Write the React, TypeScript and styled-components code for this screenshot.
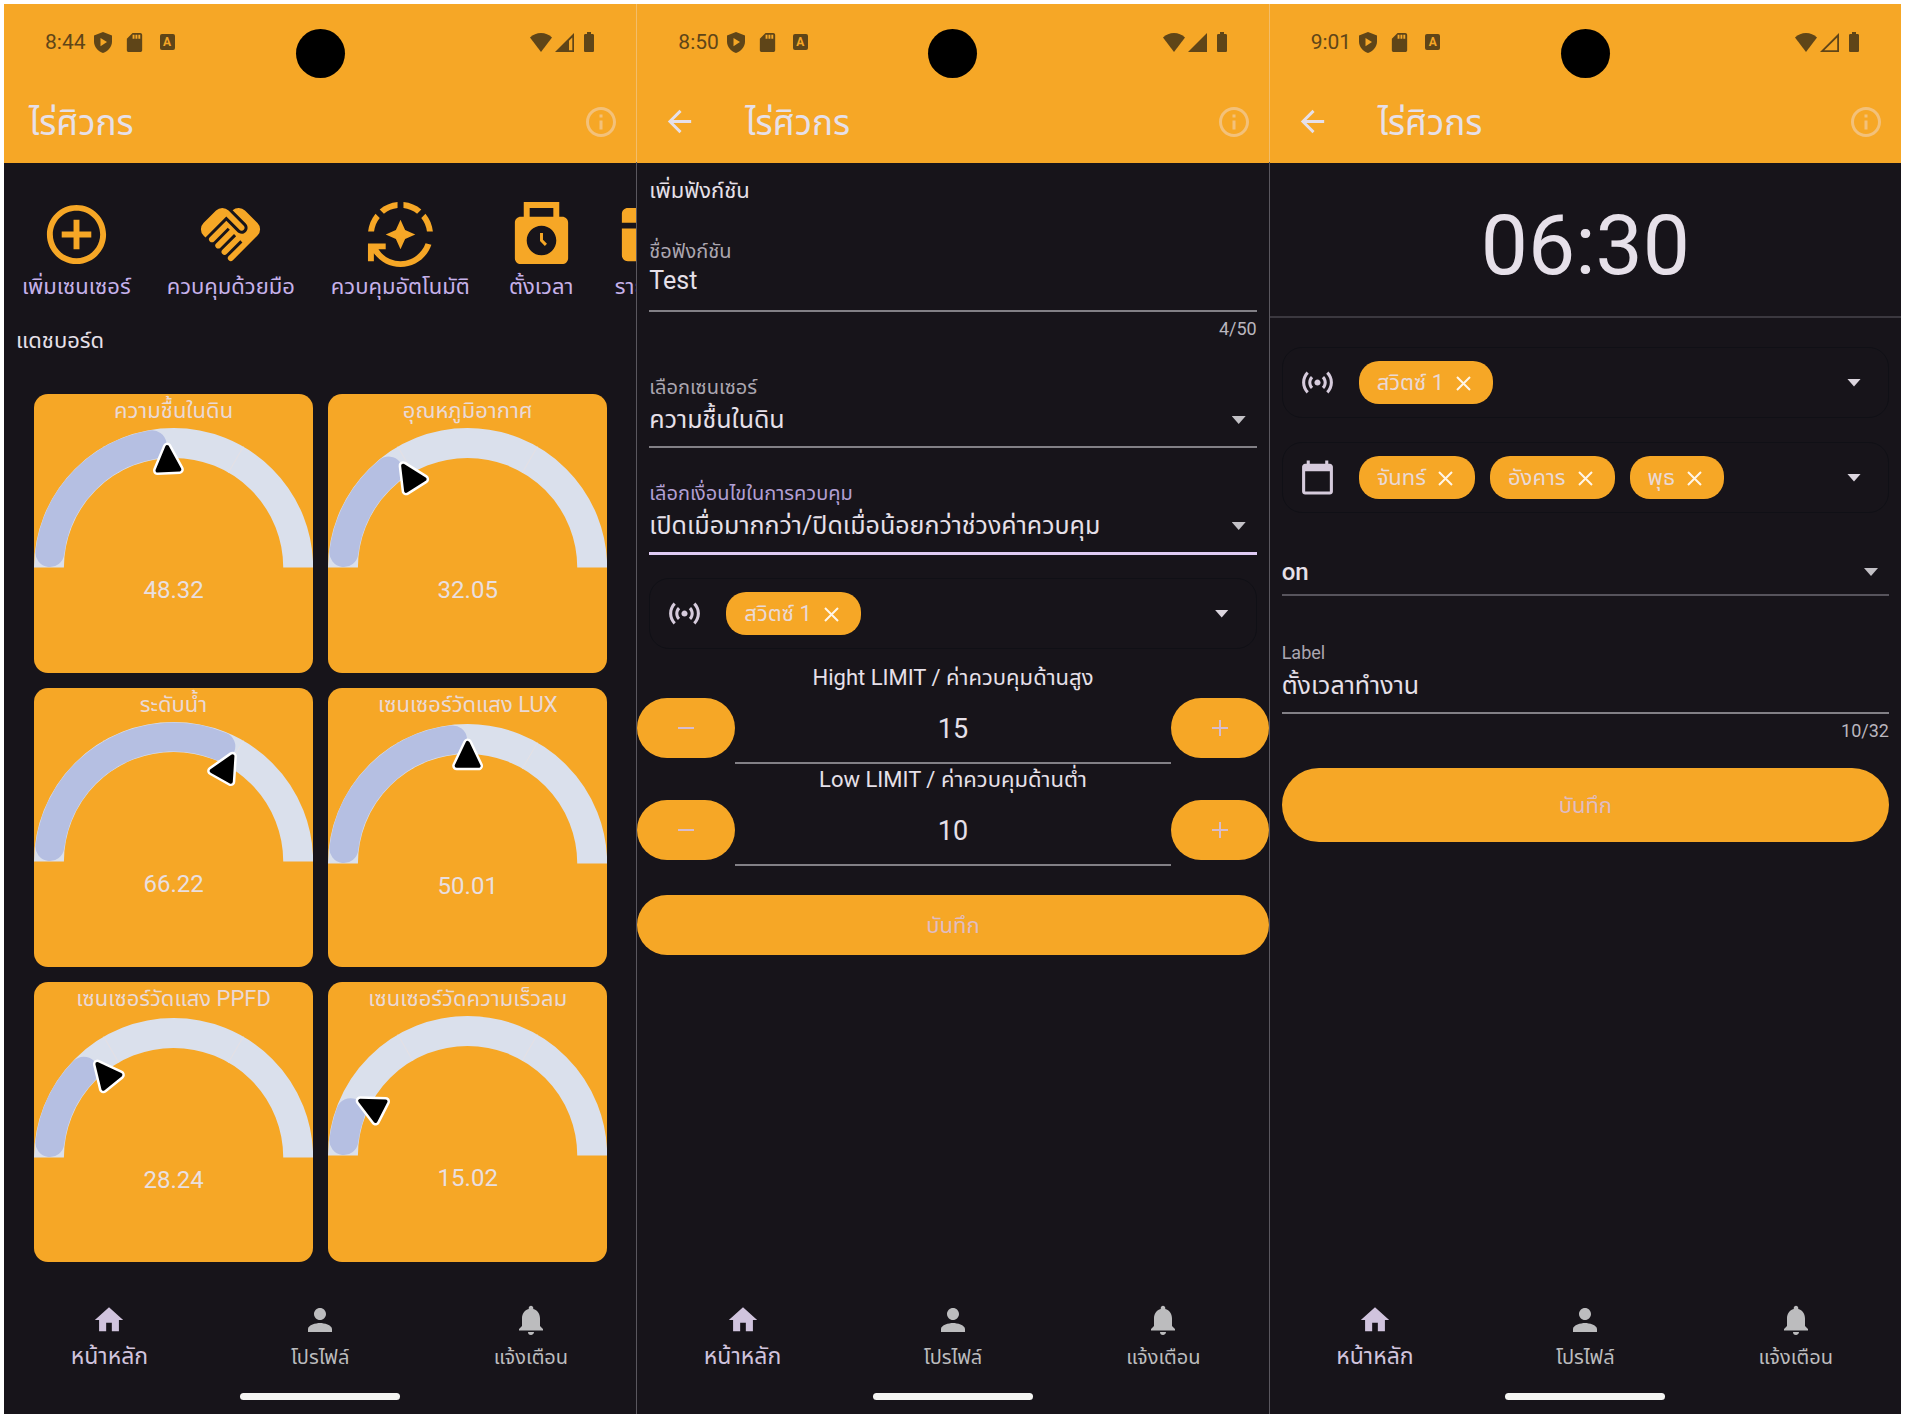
import React from "react";
import styled, { createGlobalStyle } from "styled-components";
import {
  MdAddCircleOutline,
  MdArrowBack,
  MdAutoMode,
  MdBatteryFull,
  MdCalendarToday,
  MdHandshake,
  MdHome,
  MdInfoOutline,
  MdNotifications,
  MdPerson,
  MdPunchClock,
  MdSdCard,
  MdSensors,
  MdTableChart,
} from "react-icons/md";

const color = {
  amber: "#f6a726",
  surface: "#17141a",
  text: "#e6e0e9",
  muted: "#aba6b0",
  primary: "#c6b1ea",
  focus: "#dfcbf4",
  line: "#828086",
  onAmber: "#ead9d6",
  status: "#5f4518",
};

const GlobalStyle = createGlobalStyle`
  * { box-sizing: border-box; }
  body {
    margin: 0;
    background: #fff;
    color: ${color.text};
    font-family: Roboto, "Noto Sans Thai", "Noto Sans", sans-serif;
  }
  button, input, select {
    margin: 0;
    padding: 0;
    border: 0;
    border-radius: 0;
    background: none;
    color: inherit;
    font: inherit;
    outline: none;
  }
  button, select { cursor: pointer; }
  svg { display: block; flex: none; }
`;

const Screens = styled.div`
  display: grid;
  grid-template-columns: repeat(3, minmax(0, 1fr));
  min-height: 100vh;
  padding: 4px 5px 5px 4px;
`;

const Phone = styled.section`
  display: flex;
  flex-direction: column;
  min-width: 0;
  background: ${color.surface};
  & + & {
    border-left: 1px solid;
    border-image: linear-gradient(#f3bd6a 159px, #5a575e 159px) 1;
  }
`;

/* ---------- header ---------- */

const Header = styled.header`
  background: ${color.amber};
`;

const StatusBar = styled.div`
  display: grid;
  grid-template-columns: 1fr auto 1fr;
  height: 74px;
  color: ${color.status};
`;

const StatusGroup = styled.div<{ $end?: boolean }>`
  display: flex;
  align-items: center;
  justify-content: ${(p) => (p.$end ? "flex-end" : "flex-start")};
  gap: ${(p) => (p.$end ? 3 : 8)}px;
  height: 24px;
  margin-top: 26px;
  padding: ${(p) => (p.$end ? "0 35px 0 0" : "0 0 0 41px")};
  font-size: 21px;
`;

const Camera = styled.div`
  width: 49px;
  height: 49px;
  margin-top: 25px;
  border-radius: 50%;
  background: #000;
`;

const StatusTiles = styled.span`
  display: flex;
  align-items: center;
  gap: 14px;
  margin-left: 3px;
`;

const LetterBadge = styled.span`
  width: 15px;
  height: 16px;
  border-radius: 2px;
  background: ${color.status};
  color: ${color.amber};
  font-size: 12px;
  font-weight: 700;
  line-height: 16px;
  text-align: center;
`;

const Toolbar = styled.div`
  display: flex;
  align-items: center;
  height: 85px;
  padding: 2px 17px 0 25px;
`;

const BackButton = styled.button`
  width: 37px;
  margin-right: 46px;
`;

const AppTitle = styled.h1`
  flex: 1;
  margin: 0;
  padding-top: 5px;
  font-size: 35px;
  font-weight: 400;
  line-height: 56px;
`;

const InfoButton = styled.button`
  color: #f3c17a;
`;

/* ---------- bottom navigation ---------- */

const Main = styled.main`
  flex: 1;
`;

const BottomNav = styled.nav`
  display: grid;
  grid-template-columns: repeat(3, 1fr);
`;

const NavLink = styled.a<{ $active?: boolean }>`
  display: flex;
  flex-direction: column;
  align-items: center;
  color: ${(p) => (p.$active ? "#d0c3dd" : "#bcbcbe")};
  font-size: ${(p) => (p.$active ? 23 : 20)}px;
  line-height: 32px;
  text-decoration: none;
  svg {
    height: 36px;
    margin-bottom: 3px;
  }
`;

const GestureBar = styled.div`
  width: 160px;
  height: 7px;
  margin: 20px auto 14px;
  border-radius: 4px;
  background: #f5f5f3;
`;

/* ---------- dashboard ---------- */

const Actions = styled.div`
  display: flex;
  gap: 36px;
  overflow: hidden;
  padding: 36px 0 0 18px;
`;

const Action = styled.button`
  display: flex;
  flex: none;
  flex-direction: column;
  align-items: center;
  color: ${color.primary};
  font-size: 22px;
  line-height: 34px;
  white-space: nowrap;
  svg {
    color: ${color.amber};
  }
`;

const DashTitle = styled.h2`
  margin: 22px 12px 38px;
  font-size: 22px;
  font-weight: 400;
  line-height: 30px;
`;

const Cards = styled.div`
  display: grid;
  grid-template-columns: 1fr 1fr;
  gap: 15px;
  padding: 0 29px 0 30px;
`;

const Card = styled.article`
  aspect-ratio: 1;
  overflow: hidden;
  border-radius: 14px;
  background: ${color.amber};
  color: ${color.onAmber};
  text-align: center;
`;

const CardTitle = styled.h3<{ $latin?: boolean }>`
  margin: 0;
  padding-bottom: ${(p) => (p.$latin ? 2 : 0)}px;
  font-size: 22px;
  font-weight: 400;
  line-height: 34px;
`;

const CardValue = styled.p`
  margin: 0;
  color: #e9dfe0;
  font-size: 24px;
  line-height: 44px;
`;

/* ---------- forms ---------- */

const Form = styled.form<{ $top: number }>`
  padding-top: ${(p) => p.$top}px;
`;

const Inset = styled.div`
  padding: 0 12px;
`;

const FormTitle = styled.h2`
  margin: 0;
  font-size: 22px;
  font-weight: 400;
  line-height: 32px;
`;

const FieldBox = styled.div<{ $top: number }>`
  margin-top: ${(p) => p.$top}px;
`;

const FieldLabel = styled.label<{ $focus?: boolean; $latin?: boolean }>`
  display: block;
  height: 24px;
  color: ${(p) => (p.$focus ? "#b19fd4" : color.muted)};
  font-size: ${(p) => (p.$latin ? 18 : 20)}px;
  line-height: 24px;
`;

const Control = styled.div<{ $thai?: boolean; $focus?: boolean; $dim?: boolean }>`
  display: flex;
  align-items: center;
  padding: ${(p) => (p.$dim ? "1px 0 4px" : p.$thai ? "3px 0 8px" : "0 0 11px")};
  border-bottom: ${(p) => (p.$focus ? 3 : 2)}px solid
    ${(p) => (p.$focus ? color.focus : p.$dim ? "#57545c" : color.line)};
`;

const TextInput = styled.input`
  flex: 1;
  min-width: 0;
  height: 36px;
  font-size: 25px;
  line-height: 36px;
`;

const Select = styled.select<{ $strong?: boolean }>`
  flex: 1;
  min-width: 0;
  height: 36px;
  appearance: none;
  font-size: ${(p) => (p.$strong ? 24 : 25)}px;
  font-weight: ${(p) => (p.$strong ? 500 : 400)};
  line-height: 36px;
  option {
    background: ${color.surface};
  }
`;

const Caret = styled.span<{ $light?: boolean }>`
  width: 14px;
  height: 8px;
  margin-right: 11px;
  background: ${(p) => (p.$light ? "#dcd6df" : "#c3c1c6")};
  clip-path: polygon(0 0, 100% 0, 50% 100%);
`;

const Counter = styled.div`
  margin-top: 5px;
  color: #bab6be;
  font-size: 18px;
  line-height: 24px;
  text-align: right;
`;

const ChipBox = styled.div<{ $top: number }>`
  display: flex;
  align-items: center;
  height: 71px;
  margin-top: ${(p) => p.$top}px;
  padding: 0 16px;
  border: 1px solid #101016;
  border-radius: 20px;
  color: #d6cbdc;
`;

const Chips = styled.div`
  display: flex;
  flex: 1;
  gap: 15px;
  margin-left: 23px;
`;

const Chip = styled.span`
  display: flex;
  align-items: center;
  gap: 12px;
  height: 43px;
  padding: 1px 22px 0 18px;
  border-radius: 20px;
  background: ${color.amber};
  color: ${color.onAmber};
  font-size: 22px;
`;

const ChipRemove = styled.button`
  color: #fff6e8;
`;

const OpenButton = styled.button`
  display: flex;
`;

const StepLabel = styled.label`
  display: block;
  font-size: 22px;
  line-height: 34px;
  text-align: center;
`;

const StepRow = styled.div`
  display: flex;
  align-items: flex-start;
  height: 68px;
`;

const StepButton = styled.button`
  display: flex;
  align-items: center;
  justify-content: center;
  width: 98px;
  height: 60px;
  margin-top: 3px;
  border-radius: 30px;
  background: ${color.amber};
  color: #d6bcd0;
`;

const StepInput = styled.input`
  flex: 1;
  min-width: 0;
  height: 69px;
  border-bottom: 2px solid ${color.line};
  font-size: 27px;
  text-align: center;
`;

const SaveButton = styled.button<{ $tall?: boolean; $top: number }>`
  display: block;
  width: 100%;
  height: ${(p) => (p.$tall ? 74 : 60)}px;
  margin-top: ${(p) => p.$top}px;
  padding-top: 3px;
  border-radius: 37px;
  background: ${color.amber};
  color: #dfbcc4;
  font-size: 22px;
`;

const Clock = styled.div`
  padding: 28px 0 15px;
  border-bottom: 2px solid #3b383f;
  font-size: 84px;
  line-height: 110px;
  text-align: center;
`;

/* ---------- drawings ---------- */

type Signal = "partial" | "full" | "empty";

const ShieldIcon = () => (
  <svg width="18" height="21" viewBox="0 0 18 21" aria-hidden="true">
    <path
      fill="currentColor"
      fillRule="evenodd"
      d="M9 0l9 3.4v6.3c0 5-3.8 9.500-9 11.300-5.200-1.800-9-6.300-9-11.300V3.400zM6.500 6v8.200l6.500-4.100z"
    />
  </svg>
);

const WifiIcon = () => (
  <svg width="22" height="19" viewBox="0 0 22 19" aria-hidden="true">
    <path fill="currentColor" d="M11 19L0 4.500C3 1.600 6.800 0 11 0s8 1.600 11 4.500z" />
  </svg>
);

const SignalIcon = ({ level }: { level: Signal }) => (
  <svg width="19" height="19" viewBox="0 0 19 19" aria-hidden="true">
    <path
      fill="currentColor"
      fillRule="evenodd"
      d={
        level === "full"
          ? "M19 0v19H0z"
          : level === "partial"
            ? "M19 0v19H0zM17.300 4.500l-3.300 3.300v9.500h3.300z"
            : "M19 0v19H0zM17.200 4.400L4.300 17.200h12.900z"
      }
    />
  </svg>
);

const CloseIcon = () => (
  <svg width="15" height="15" viewBox="0 0 15 15" aria-hidden="true">
    <path d="M1 1l13 13M14 1L1 14" stroke="currentColor" strokeWidth="2" />
  </svg>
);

const StepIcon = ({ plus }: { plus?: boolean }) => (
  <svg width="16" height="16" viewBox="0 0 16 16" aria-hidden="true">
    <path
      d={plus ? "M0 8h16M8 0v16" : "M0 8h16"}
      stroke="currentColor"
      strokeWidth="2"
    />
  </svg>
);

const CENTER = 140;
const MID = 125;
const point = (deg: number, r: number) => {
  const a = (deg * Math.PI) / 180;
  return `${(CENTER - r * Math.cos(a)).toFixed(2)} ${(CENTER - r * Math.sin(a)).toFixed(2)}`;
};
const arc = (from: number, to: number) =>
  `M${point(from, MID)}A${MID} ${MID} 0 0 1 ${point(to, MID)}`;

const Gauge = ({ value }: { value: number }) => {
  const end = value * 1.8;
  const cap = 6.9;
  return (
    <svg width="100%" viewBox="0 0 280 140" role="img" aria-label={`${value}`}>
      <path d={arc(0, 180)} fill="none" stroke="#dae0ec" strokeWidth="30" />
      {[60, 120].map((deg) => (
        <path key={deg} d={`M${point(deg, 110)}L${point(deg, 140)}`} stroke="#e5e1e4" />
      ))}
      <path
        d={arc(cap, end - cap)}
        fill="none"
        stroke="#b5bfe2"
        strokeWidth="29"
        strokeLinecap="round"
      />
      <g transform={`rotate(${end - 90} ${CENTER} ${CENTER})`} strokeLinejoin="round">
        <path d="M140 19l11 23h-22z" fill="#fff" stroke="#fff" strokeWidth="9" />
        <path d="M140 19l11 23h-22z" stroke="#000" strokeWidth="4" />
      </g>
    </svg>
  );
};

/* ---------- composition ---------- */

const PhoneFrame = ({
  time,
  signal,
  back,
  children,
}: {
  time: string;
  signal: Signal;
  back?: boolean;
  children: React.ReactNode;
}) => (
  <Phone>
    <Header>
      <StatusBar>
        <StatusGroup>
          <span>{time}</span>
          <ShieldIcon />
          <StatusTiles>
            <MdSdCard size={23} />
            <LetterBadge>A</LetterBadge>
          </StatusTiles>
        </StatusGroup>
        <Camera />
        <StatusGroup $end>
          <WifiIcon />
          <SignalIcon level={signal} />
          <MdBatteryFull size={24} />
        </StatusGroup>
      </StatusBar>
      <Toolbar>
        {back && (
          <BackButton type="button" aria-label="ย้อนกลับ">
            <MdArrowBack size={35} />
          </BackButton>
        )}
        <AppTitle>ไร่ศิวกร</AppTitle>
        <InfoButton type="button" aria-label="ข้อมูล">
          <MdInfoOutline size={36} />
        </InfoButton>
      </Toolbar>
    </Header>
    <Main>{children}</Main>
    <BottomNav>
      <NavLink href="#home" $active>
        <MdHome size={34} />
        หน้าหลัก
      </NavLink>
      <NavLink href="#profile">
        <MdPerson size={36} />
        โปรไฟล์
      </NavLink>
      <NavLink href="#alerts">
        <MdNotifications size={36} />
        แจ้งเตือน
      </NavLink>
    </BottomNav>
    <GestureBar />
  </Phone>
);

const ChipPicker = ({
  icon,
  items,
  top,
  label,
}: {
  icon: React.ReactNode;
  items: string[];
  top: number;
  label: string;
}) => (
  <ChipBox $top={top}>
    {icon}
    <Chips>
      {items.map((item) => (
        <Chip key={item}>
          {item}
          <ChipRemove type="button" aria-label={`ลบ ${item}`}>
            <CloseIcon />
          </ChipRemove>
        </Chip>
      ))}
    </Chips>
    <OpenButton type="button" aria-label={label}>
      <Caret $light />
    </OpenButton>
  </ChipBox>
);

const Stepper = ({ id, label, value }: { id: string; label: string; value: string }) => (
  <div>
    <StepLabel htmlFor={id}>{label}</StepLabel>
    <StepRow>
      <StepButton type="button" aria-label="ลด">
        <StepIcon />
      </StepButton>
      <StepInput id={id} inputMode="numeric" defaultValue={value} />
      <StepButton type="button" aria-label="เพิ่ม">
        <StepIcon plus />
      </StepButton>
    </StepRow>
  </div>
);

const actions = [
  { label: "เพิ่มเซนเซอร์", Icon: MdAddCircleOutline },
  { label: "ควบคุมด้วยมือ", Icon: MdHandshake },
  { label: "ควบคุมอัตโนมัติ", Icon: MdAutoMode },
  { label: "ตั้งเวลา", Icon: MdPunchClock },
  { label: "รายงาน", Icon: MdTableChart },
];

const sensors = [
  { title: "ความชื้นในดิน", value: 48.32 },
  { title: "อุณหภูมิอากาศ", value: 32.05 },
  { title: "ระดับน้ำ", value: 66.22 },
  { title: "เซนเซอร์วัดแสง LUX", value: 50.01, latin: true },
  { title: "เซนเซอร์วัดแสง PPFD", value: 28.24, latin: true },
  { title: "เซนเซอร์วัดความเร็วลม", value: 15.02 },
];

const Dashboard = () => (
  <PhoneFrame time="8:44" signal="partial">
    <Actions>
      {actions.map(({ label, Icon }) => (
        <Action key={label} type="button">
          <Icon size={71} />
          {label}
        </Action>
      ))}
    </Actions>
    <DashTitle>แดชบอร์ด</DashTitle>
    <Cards>
      {sensors.map(({ title, value, latin }) => (
        <Card key={title}>
          <CardTitle $latin={latin}>{title}</CardTitle>
          <Gauge value={value} />
          <CardValue>{value.toFixed(2)}</CardValue>
        </Card>
      ))}
    </Cards>
  </PhoneFrame>
);

const FunctionForm = () => (
  <PhoneFrame time="8:50" signal="full" back>
    <Form $top={12}>
      <Inset>
        <FormTitle>เพิ่มฟังก์ชัน</FormTitle>
        <FieldBox $top={32}>
          <FieldLabel htmlFor="fn-name">ชื่อฟังก์ชัน</FieldLabel>
          <Control>
            <TextInput id="fn-name" defaultValue="Test" maxLength={50} />
          </Control>
          <Counter>4/50</Counter>
        </FieldBox>
        <FieldBox $top={34}>
          <FieldLabel htmlFor="fn-sensor">เลือกเซนเซอร์</FieldLabel>
          <Control $thai>
            <Select id="fn-sensor">
              <option>ความชื้นในดิน</option>
            </Select>
            <Caret />
          </Control>
        </FieldBox>
        <FieldBox $top={33}>
          <FieldLabel htmlFor="fn-rule" $focus>
            เลือกเงื่อนไขในการควบคุม
          </FieldLabel>
          <Control $thai $focus>
            <Select id="fn-rule">
              <option>เปิดเมื่อมากกว่า/ปิดเมื่อน้อยกว่าช่วงค่าควบคุม</option>
            </Select>
            <Caret />
          </Control>
        </FieldBox>
        <ChipPicker icon={<MdSensors size={37} />} items={["สวิตซ์ 1"]} top={23} label="เลือกสวิตซ์" />
      </Inset>
      <FieldBox $top={12}>
        <Stepper id="limit-high" label="Hight LIMIT / ค่าควบคุมด้านสูง" value="15" />
        <Stepper id="limit-low" label="Low LIMIT / ค่าควบคุมด้านต่ำ" value="10" />
      </FieldBox>
      <SaveButton type="button" $top={30}>
        บันทึก
      </SaveButton>
    </Form>
  </PhoneFrame>
);

const TimerForm = () => (
  <PhoneFrame time="9:01" signal="empty" back>
    <Clock>
      <time>06:30</time>
    </Clock>
    <Form $top={29}>
      <Inset>
        <ChipPicker icon={<MdSensors size={37} />} items={["สวิตซ์ 1"]} top={0} label="เลือกสวิตซ์" />
        <ChipPicker
          icon={<MdCalendarToday size={37} />}
          items={["จันทร์", "อังคาร", "พุธ"]}
          top={24}
          label="เลือกวัน"
        />
        <FieldBox $top={40}>
          <Control $dim>
            <Select $strong aria-label="สถานะ">
              <option>on</option>
              <option>off</option>
            </Select>
            <Caret />
          </Control>
        </FieldBox>
        <FieldBox $top={45}>
          <FieldLabel htmlFor="timer-label" $latin>
            Label
          </FieldLabel>
          <Control $thai>
            <TextInput id="timer-label" defaultValue="ตั้งเวลาทำงาน" maxLength={32} />
          </Control>
          <Counter>10/32</Counter>
        </FieldBox>
        <SaveButton type="button" $tall $top={25}>
          บันทึก
        </SaveButton>
      </Inset>
    </Form>
  </PhoneFrame>
);

export default function App() {
  return (
    <>
      <GlobalStyle />
      <Screens>
        <Dashboard />
        <FunctionForm />
        <TimerForm />
      </Screens>
    </>
  );
}
